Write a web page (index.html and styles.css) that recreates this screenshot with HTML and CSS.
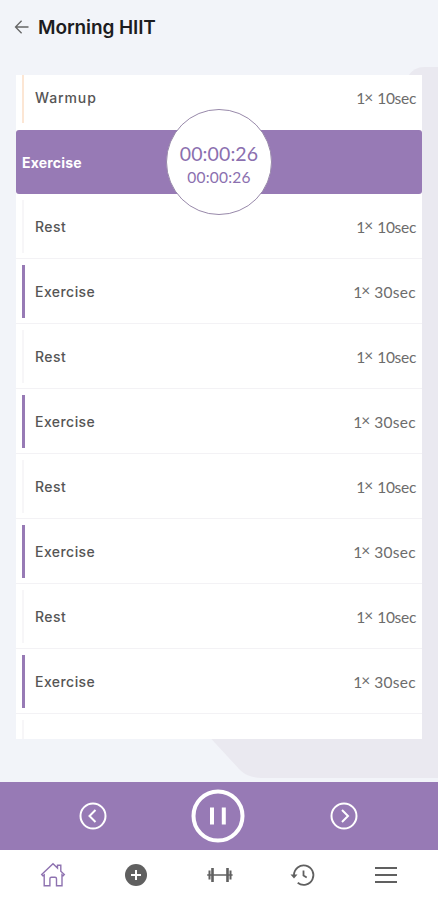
FILE: index.html
```html
<!DOCTYPE html>
<html lang="en">
<head>
<meta charset="utf-8">
<title>Morning HIIT</title>
<link rel="stylesheet" href="styles.css">
</head>
<body>
<div class="app">
  <svg class="backdrop" viewBox="0 0 438 782"><path d="M438 67H424Q414 67 408 76L204 731L240 770Q248 778 262 778H438Z"/></svg>
  <header class="header">
    <svg class="back" viewBox="0 0 16 16"><path d="M14.5 8H1.8M7.6 1.8L1.5 8l6.1 6.2"/></svg>
    <h1 class="title">Morning HIIT</h1>
  </header>
  <main class="list">
    <div class="row warmup"><span class="name">Warmup</span><span class="time ten"><b>1</b><i>×</i><span>10sec</span></span></div>
    <div class="row active"><span class="name">Exercise</span>
      <div class="timer"><span class="timer-main">00:00:26</span><span class="timer-sub">00:00:26</span></div>
    </div>
    <div class="row rest"><span class="name">Rest</span><span class="time ten"><b>1</b><i>×</i><span>10sec</span></span></div>
    <div class="row work"><span class="name">Exercise</span><span class="time"><b>1</b><i>×</i><span>30sec</span></span></div>
    <div class="row rest"><span class="name">Rest</span><span class="time ten"><b>1</b><i>×</i><span>10sec</span></span></div>
    <div class="row work"><span class="name">Exercise</span><span class="time"><b>1</b><i>×</i><span>30sec</span></span></div>
    <div class="row rest"><span class="name">Rest</span><span class="time ten"><b>1</b><i>×</i><span>10sec</span></span></div>
    <div class="row work"><span class="name">Exercise</span><span class="time"><b>1</b><i>×</i><span>30sec</span></span></div>
    <div class="row rest"><span class="name">Rest</span><span class="time ten"><b>1</b><i>×</i><span>10sec</span></span></div>
    <div class="row work"><span class="name">Exercise</span><span class="time"><b>1</b><i>×</i><span>30sec</span></span></div>
    <div class="row rest"></div>
  </main>
  <section class="controls">
    <svg class="skip" viewBox="0 0 28 28"><circle cx="14" cy="14" r="12.5"/><path d="M16.5 8L10.500 14l6 6"/></svg>
    <svg class="pause" viewBox="0 0 54 54"><circle cx="27" cy="27" r="24.5"/><path d="M21 18.500v17M32.800 18.500v17"/></svg>
    <svg class="skip" viewBox="0 0 28 28"><circle cx="14" cy="14" r="12.5"/><path d="M12 8l6 6-6 6"/></svg>
  </section>
  <nav class="nav">
    <svg class="icon home" viewBox="0 0 28 28"><path d="M2.700 13.500L14 2.800l4.500 4.300V4.200h3.300v6l3.500 3.300-1.200 1.300-1.100-1v11h-5.500v-7q0-1.500-1.500-1.500h-3.600q-1.500 0-1.500 1.500v7H5.200v-11l-1.300 1z"/></svg>
    <svg class="icon" viewBox="0 0 28 28"><circle class="solid" cx="14" cy="14" r="11"/><path class="plus" d="M14 9v10M9 14h10"/></svg>
    <svg class="icon" viewBox="0 0 28 28"><path class="bar" d="M1.200 14h25.400"/><path class="plate" d="M6.500 7v14M21.500 7v14"/><path class="plate-end" d="M3.500 9.500v9M24.500 9.500v9"/></svg>
    <svg class="icon" viewBox="0 0 28 28"><path class="clock" d="M5 14A9.700 9.700 0 1 1 8.700 21.700M14.500 9.500v5l3.200 2"/><path class="solid" d="M1.500 13.500h7l-3.500 4z"/></svg>
    <svg class="icon" viewBox="0 0 28 28"><path class="menu" d="M3 7h22M3 14h22M3 21h22"/></svg>
  </nav>
</div>
</body>
</html>
```
FILE: styles.css
```css
* { box-sizing: border-box; }
body { margin: 0; font-family: Inter, Lato, sans-serif; color: #555; }
.app {
  position: relative;
  width: 438px;
  height: 900px;
  display: flex;
  flex-direction: column;
  overflow: hidden;
  background: #f2f4f9;
}
.backdrop { position: absolute; top: 0; left: 0; width: 438px; height: 782px; fill: #eae9f0; }
.header {
  height: 75px;
  padding: 15px 0 0 14px;
  display: flex;
  align-items: flex-start;
  gap: 8px;
}
.back { width: 16px; height: 16px; margin-top: 4px; fill: none; stroke: #666; stroke-width: 1.3; }
.title { margin: 1px 0 0; font-size: 19px; line-height: 24px; font-weight: 600; letter-spacing: -.1px; color: #1c1c20; white-space: nowrap; }
.list {
  position: relative;
  width: 406px;
  height: 664px;
  margin-left: 16px;
  background: #fff;
  overflow: hidden;
}
.row {
  position: relative;
  height: 65px;
  padding: 0 6px 0 19px;
  display: flex;
  align-items: center;
  justify-content: space-between;
  border-bottom: 1.5px solid #f3f2f5;
}
.row::before {
  content: "";
  position: absolute;
  left: 6px;
  top: 6px;
  bottom: 5px;
  width: 1.5px;
  background: #f7f6f8;
}
.work::before { width: 2.5px; background: #977ab5; }
.warmup { height: 55px; padding-bottom: 10px; border: 0; }
.warmup::before { top: 0; bottom: 7px; width: 2px; background: #fce6d4; }
.active {
  height: 64px;
  padding-left: 6px;
  background: #977ab5;
  border: 0;
  border-radius: 3px;
  color: #fff;
  z-index: 1;
}
.active::before { display: none; }
.name { font-size: 14px; font-weight: 500; letter-spacing: .45px; }
.warmup .name { letter-spacing: .9px; }
.active .name { font-weight: 700; letter-spacing: .2px; }
.time { display: flex; align-items: center; padding-top: 1px; font-family: Lato, sans-serif; font-size: 15.5px; font-weight: 400; letter-spacing: .3px; color: #6c6c6c; }
.time b { width: 8px; font-weight: 400; }
.time i { width: 13px; font-style: normal; line-height: 14px; padding-bottom: 3px; }
.ten span { letter-spacing: -.3px; }
.timer {
  position: absolute;
  left: 150px;
  top: -21px;
  width: 106px;
  height: 106px;
  padding-top: 6px;
  border: 1px solid #9889aa;
  border-radius: 50%;
  background: #fff;
  display: flex;
  flex-direction: column;
  align-items: center;
  justify-content: center;
  font-family: Lato, sans-serif;
  color: #8b70af;
}
.timer-main { font-size: 19.5px; line-height: 25px; letter-spacing: .1px; }
.timer-sub { font-size: 15.5px; line-height: 23px; letter-spacing: .2px; }
.controls {
  position: relative;
  height: 68px;
  margin-top: 43px;
  padding: 0 80px 0 79px;
  display: flex;
  align-items: center;
  justify-content: space-between;
  background: #977ab5;
}
.controls svg { fill: none; stroke: #fff; }
.skip { width: 28px; height: 28px; stroke-width: 2; }
.pause { width: 54px; height: 54px; margin-right: 2px; stroke-width: 4; }
.nav {
  position: relative;
  height: 50px;
  padding: 0 38px 0 39px;
  display: flex;
  align-items: center;
  justify-content: space-between;
  background: #fff;
}
.icon { width: 28px; height: 28px; fill: none; stroke: #606060; stroke-width: 1.8; }
.home { stroke: #8e72b0; stroke-width: 1.4; }
.solid { fill: #606060; stroke: none; }
.plus { stroke: #fff; stroke-width: 2; }
.bar { stroke-width: 1.5; }
.plate { stroke-width: 2.6; }
.plate-end { stroke-width: 2; }
```
